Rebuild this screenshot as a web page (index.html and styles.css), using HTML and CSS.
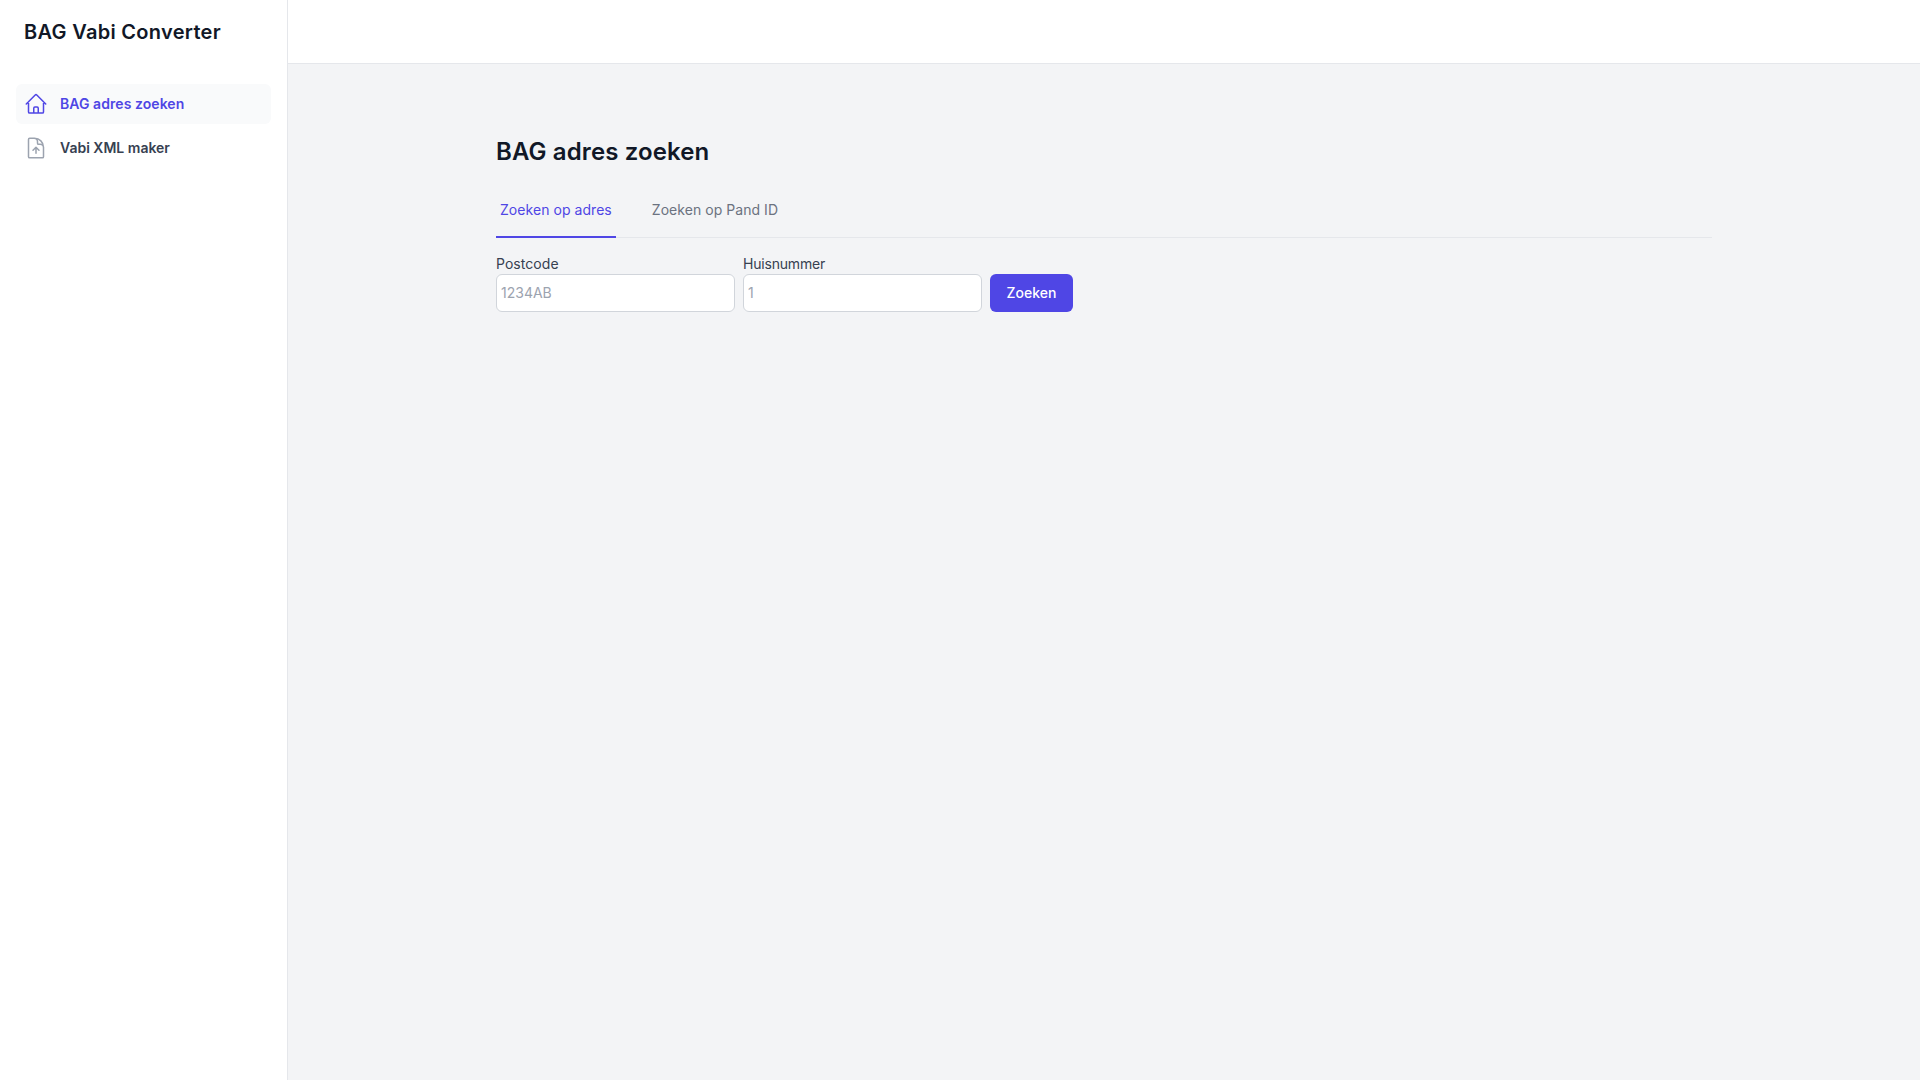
FILE: index.html
```html
<!DOCTYPE html>
<html lang="nl">
<head>
<meta charset="utf-8">
<title>BAG Vabi Converter</title>
<link rel="stylesheet" href="styles.css">
</head>
<body>
<div class="app">
  <aside class="sidebar">
    <div class="brand">BAG Vabi Converter</div>
    <nav class="nav">
      <a class="nav-item active" href="#">
        <svg class="nav-icon" viewBox="0 0 24 24" fill="none" stroke="currentColor" stroke-width="1.5" stroke-linecap="round" stroke-linejoin="round"><path d="M2.25 12l8.954-8.955c.44-.439 1.152-.439 1.591 0L21.75 12M4.5 9.75v10.125c0 .621.504 1.125 1.125 1.125H9.75v-4.875c0-.621.504-1.125 1.125-1.125h2.25c.621 0 1.125.504 1.125 1.125V21h4.125c.621 0 1.125-.504 1.125-1.125V9.75M8.25 21h8.25"/></svg>
        <span>BAG adres zoeken</span>
      </a>
      <a class="nav-item" href="#">
        <svg class="nav-icon muted" viewBox="0 0 24 24" fill="none" stroke="currentColor" stroke-width="1.5" stroke-linecap="round" stroke-linejoin="round"><path d="M19.5 14.25v-2.625a3.375 3.375 0 00-3.375-3.375h-1.5A1.125 1.125 0 0113.5 7.125v-1.5a3.375 3.375 0 00-3.375-3.375H8.25m6.75 12l-3-3m0 0l-3 3m3-3v6m-1.5-15H5.625c-.621 0-1.125.504-1.125 1.125v17.25c0 .621.504 1.125 1.125 1.125h12.75c.621 0 1.125-.504 1.125-1.125V11.25a9 9 0 00-9-9z"/></svg>
        <span>Vabi XML maker</span>
      </a>
    </nav>
  </aside>
  <div class="main-wrap">
    <header class="topbar"></header>
    <main class="main">
      <div class="container">
        <h1 class="title">BAG adres zoeken</h1>
        <div class="tabs">
          <a class="tab active" href="#">Zoeken op adres</a>
          <a class="tab" href="#">Zoeken op Pand ID</a>
        </div>
        <form class="form">
          <div class="field">
            <label class="label" for="pc">Postcode</label>
            <input class="input" id="pc" type="text" placeholder="1234AB">
          </div>
          <div class="field">
            <label class="label label-tight" for="hn">Huisnummer</label>
            <input class="input" id="hn" type="text" placeholder="1">
          </div>
          <button class="button" type="button">Zoeken</button>
        </form>
      </div>
    </main>
  </div>
</div>
</body>
</html>
```
FILE: styles.css
```css
* { box-sizing: border-box; }
html, body { margin: 0; height: 100%; }
body {
  font-family: Inter, "Liberation Sans", sans-serif;
  font-optical-sizing: none;
  background: #f3f4f6;
  color: #111827;
  overflow: hidden;
}
.app { display: flex; height: 100vh; }
.sidebar {
  width: 288px;
  flex: none;
  background: #fff;
  border-right: 1px solid #e5e7eb;
  padding: 0 16px;
}
.brand {
  height: 64px;
  padding-left: 8px;
  display: flex;
  align-items: center;
  font-size: 20px;
  line-height: 28px;
  font-weight: 600;
  letter-spacing: .3px;
  color: #111827;
}
.nav { display: flex; flex-direction: column; gap: 4px; margin-top: 20px; }
.nav-item {
  display: flex;
  align-items: center;
  gap: 12px;
  height: 40px;
  padding: 8px;
  border-radius: 6px;
  font-size: 14px;
  line-height: 24px;
  font-weight: 600;
  color: #374151;
  text-decoration: none;
}
.nav-item.active { background: #f9fafb; color: #4f46e5; letter-spacing: .06px; }
.nav-icon { width: 24px; height: 24px; flex: none; }
.nav-icon.muted { color: #9ca3af; }
.main-wrap { flex: 1; display: flex; flex-direction: column; min-width: 0; }
.topbar { height: 64px; flex: none; background: #fff; border-bottom: 1px solid #e5e7eb; }
.main { flex: 1; padding-top: 72px; }
.container { max-width: 1280px; margin: 0 auto; padding: 0 32px; }
.title { margin: 0; font-size: 24px; line-height: 32px; font-weight: 600; letter-spacing: .12px; color: #111827; }
.tabs {
  display: flex;
  gap: 32px;
  margin-top: 13px;
  height: 57px;
  border-bottom: 1px solid #e5e7eb;
}
.tab {
  height: 57px;
  padding: 0 4px 16px;
  display: flex;
  align-items: flex-end;
  font-size: 14px;
  line-height: 20px;
  font-weight: 400;
  letter-spacing: .05px;
  color: #6b7280;
  text-decoration: none;
  border-bottom: 2px solid transparent;
}
.tab.active { color: #4f46e5; border-bottom-color: #4f46e5; }
.form { display: flex; align-items: flex-end; gap: 8px; margin-top: 16px; }
.field { display: flex; flex-direction: column; width: 239px; }
.label { font-size: 14px; line-height: 20px; color: #374151; letter-spacing: .05px; }
.label-tight { letter-spacing: -.2px; }
.input {
  width: 239px;
  height: 38px;
  padding: 0 4px 1px;
  background: #fff;
  border: 1px solid #d1d5db;
  border-radius: 6px;
  font: 14px/20px Inter, "Liberation Sans", sans-serif;
  color: #111827;
  outline: none;
}
.input::placeholder { color: #9ca3af; opacity: 1; }
.button {
  height: 38px;
  width: 83px;
  padding: 0;
  border: 0;
  border-radius: 6px;
  background: #4f46e5;
  color: #fff;
  font: 500 14px/20px Inter, "Liberation Sans", sans-serif;
}
```
